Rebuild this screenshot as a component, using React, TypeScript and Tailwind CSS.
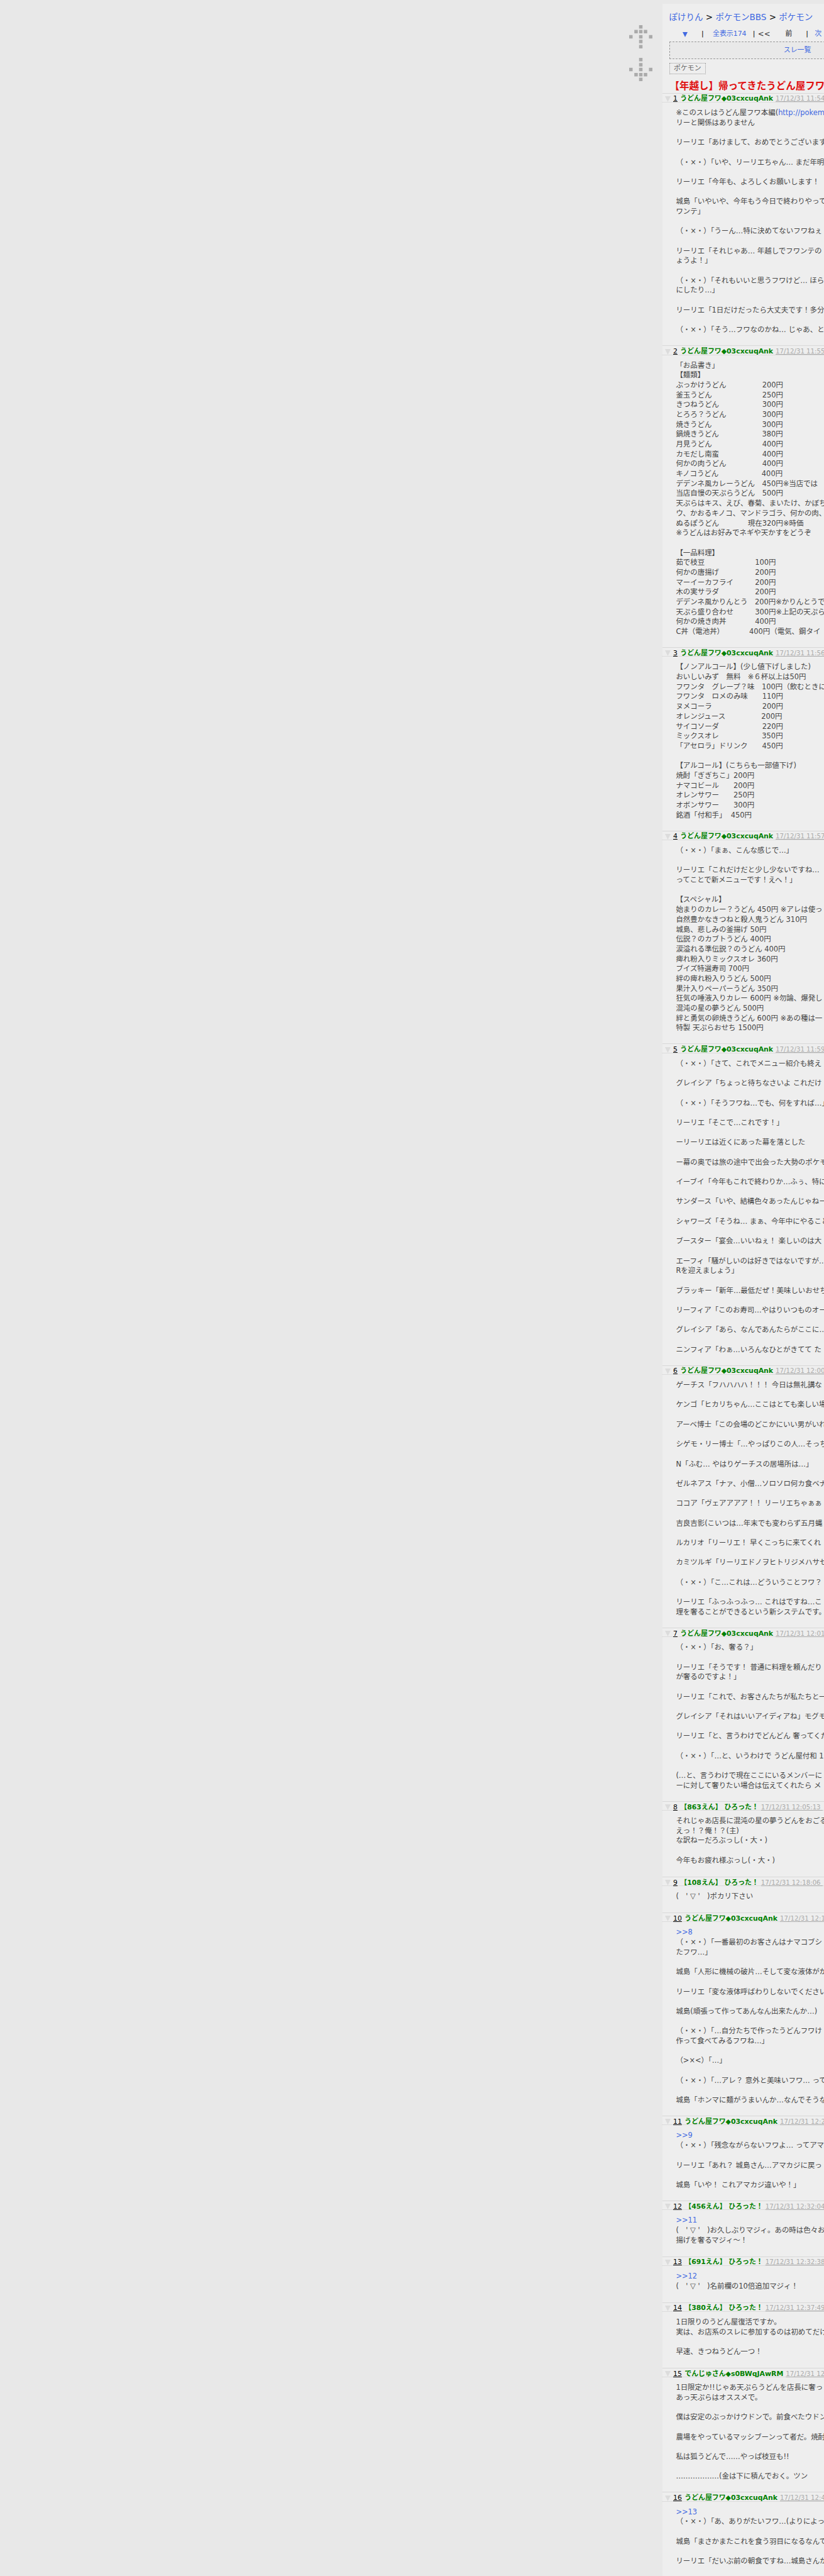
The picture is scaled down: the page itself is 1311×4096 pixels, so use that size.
const FW = "　";
const sp = (n: number) => FW.repeat(n);
const FACE = "（・×・）";
const KAO = "(　' ▽ '　)";
const ME = "うどん屋フワ◆03cxcuqAnk";

type Post = { no: number; name: string; date: string; lines: string[] };

const posts: Post[] = [
  {
    no: 1,
    name: ME,
    date: "17/12/31 11:54",
    lines: [
      "※このスレはうどん屋フワ本編(http://pokemon",
      "リーと関係はありません",
      "",
      "リーリエ「あけまして、おめでとうございます",
      "",
      `${FACE}「いや、リーリエちゃん… まだ年明`,
      "",
      "リーリエ「今年も、よろしくお願いします！",
      "",
      "城島「いやいや、今年もう今日で終わりやって",
      "ワンテ」",
      "",
      `${FACE}「うーん…特に決めてないフワねぇ`,
      "",
      "リーリエ「それじゃあ… 年越しでフワンテの",
      "ょうよ！」",
      "",
      `${FACE}「それもいいと思うフワけど… ほら`,
      "にしたり…」",
      "",
      "リーリエ「1日だけだったら大丈夫です！多分",
      "",
      `${FACE}「そう…フワなのかね… じゃあ、と`,
    ],
  },
  {
    no: 2,
    name: ME,
    date: "17/12/31 11:55",
    lines: [
      "「お品書き」",
      "【麺類】",
      `ぶっかけうどん${sp(5)}200円`,
      `釜玉うどん${sp(7)}250円`,
      `きつねうどん${sp(6)}300円`,
      `とろろ？うどん${sp(5)}300円`,
      `焼きうどん${sp(7)}300円`,
      `鍋焼きうどん${sp(6)}380円`,
      `月見うどん${sp(7)}400円`,
      `カモだし南蛮${sp(6)}400円`,
      `何かの肉うどん${sp(5)}400円`,
      `キノコうどん${sp(6)}400円`,
      `デデンネ風カレーうどん${sp(1)}450円※当店では`,
      `当店自慢の天ぷらうどん${sp(1)}500円`,
      "天ぷらはキス、えび、春菊、まいたけ、かぼち",
      "ウ、かおるキノコ、マンドラゴラ、何かの肉、",
      `ぬるぽうどん${sp(4)}現在320円※時価`,
      "※うどんはお好みでネギや天かすをどうぞ",
      "",
      "【一品料理】",
      `茹で枝豆${sp(7)}100円`,
      `何かの唐揚げ${sp(5)}200円`,
      `マーイーカフライ${sp(3)}200円`,
      `木の実サラダ${sp(5)}200円`,
      `デデンネ風かりんとう${sp(1)}200円※かりんとうで`,
      `天ぷら盛り合わせ${sp(3)}300円※上記の天ぷら`,
      `何かの焼き肉丼${sp(4)}400円`,
      `C丼（電池丼）${sp(4)}400円（電気、鋼タイ`,
    ],
  },
  {
    no: 3,
    name: ME,
    date: "17/12/31 11:56",
    lines: [
      "【ノンアルコール】(少し値下げしました)",
      `おいしいみず${FW}無料${FW}※６杯以上は50円`,
      `フワンタ${FW}グレープ？味${FW}100円（飲むときに`,
      `フワンタ${FW}ロメのみ味${sp(2)}110円`,
      `ヌメコーラ${sp(7)}200円`,
      `オレンジュース${sp(5)}200円`,
      `サイコソーダ${sp(6)}220円`,
      `ミックスオレ${sp(6)}350円`,
      `「アセロラ」ドリンク${sp(2)}450円`,
      "",
      "【アルコール】(こちらも一部値下げ)",
      "焼酎「ぎぎちこ」200円",
      `ナマコビール${sp(2)}200円`,
      `オレンサワー${sp(2)}250円`,
      `オボンサワー${sp(2)}300円`,
      "銘酒「付和手」  450円",
    ],
  },
  {
    no: 4,
    name: ME,
    date: "17/12/31 11:57",
    lines: [
      `${FACE}「まぁ、こんな感じで…」`,
      "",
      "リーリエ「これだけだと少し少ないですね…",
      "ってことで新メニューです！えへ！」",
      "",
      "【スペシャル】",
      "始まりのカレー？うどん 450円 ※アレは使っ",
      "自然豊かなきつねと殺人鬼うどん 310円",
      "城島、悲しみの釜揚げ 50円",
      "伝説？のカブトうどん 400円",
      "涙溢れる準伝説？のうどん 400円",
      "痺れ粉入りミックスオレ 360円",
      "ブイズ特選寿司 700円",
      "絆の痺れ粉入りうどん 500円",
      "果汁入りペーパーうどん 350円",
      "狂気の唾液入りカレー 600円 ※勿論、爆発し",
      "混沌の星の夢うどん 500円",
      "絆と勇気の卵焼きうどん 600円 ※あの種は一",
      "特製 天ぷらおせち 1500円",
    ],
  },
  {
    no: 5,
    name: ME,
    date: "17/12/31 11:59",
    lines: [
      `${FACE}「さて、これでメニュー紹介も終え`,
      "",
      "グレイシア「ちょっと待ちなさいよ これだけ",
      "",
      `${FACE}「そうフワね…でも、何をすれば…」`,
      "",
      "リーリエ「そこで…これです！」",
      "",
      "ーリーリエは近くにあった幕を落とした",
      "",
      "ー幕の奥では旅の途中で出会った大勢のポケモ",
      "",
      "イーブイ「今年もこれで終わりか…ふぅ、特に",
      "",
      "サンダース「いや、結構色々あったんじゃねー",
      "",
      "シャワーズ「そうね… まぁ、今年中にやること",
      "",
      "ブースター「宴会…いいねぇ！ 楽しいのは大",
      "",
      "エーフィ「騒がしいのは好きではないですが…",
      "Rを迎えましょう」",
      "",
      "ブラッキー「新年…最低だぜ！美味しいおせち",
      "",
      "リーフィア「このお寿司…やはりいつものオー",
      "",
      "グレイシア「あら、なんであんたらがここに…",
      "",
      "ニンフィア「わぁ…いろんなひとがきてて た",
    ],
  },
  {
    no: 6,
    name: ME,
    date: "17/12/31 12:00",
    lines: [
      "ゲーチス「フハハハハ！！！ 今日は無礼講な",
      "",
      "ケンゴ「ヒカリちゃん…ここはとても楽しい場",
      "",
      "アーベ博士「この会場のどこかにいい男がいれ",
      "",
      "シゲモ・リー博士「…やっぱりこの人…そっち",
      "",
      "N「ふむ… やはりゲーチスの居場所は…」",
      "",
      "ゼルネアス「ナァ、小僧…ソロソロ何カ食ベナ",
      "",
      "ココア「ヴェアアアア！！ リーリエちゃぁぁ",
      "",
      "吉良吉影(こいつは…年末でも変わらず五月蝿",
      "",
      "ルカリオ「リーリエ！ 早くこっちに来てくれ",
      "",
      "カミツルギ「リーリエドノヲヒトリジメハサセ",
      "",
      `${FACE}「こ…これは…どういうことフワ？`,
      "",
      "リーリエ「ふっふっふっ… これはですね…こ",
      "理を奢ることができるという新システムです。",
    ],
  },
  {
    no: 7,
    name: ME,
    date: "17/12/31 12:01",
    lines: [
      `${FACE}「お、奢る？」`,
      "",
      "リーリエ「そうです！ 普通に料理を頼んだり",
      "が奢るのですよ！」",
      "",
      "リーリエ「これで、お客さんたちが私たちと一",
      "",
      "グレイシア「それはいいアイディアね」モグモ",
      "",
      "リーリエ「と、言うわけでどんどん 奢ってくだ",
      "",
      `${FACE}「…と、いうわけで うどん屋付和 1`,
      "",
      "(…と、言うわけで現在ここにいるメンバーに",
      "ーに対して奢りたい場合は伝えてくれたら メ",
    ],
  },
  {
    no: 8,
    name: "【863えん】 ひろった！",
    date: "17/12/31 12:05:13 ",
    lines: ["それじゃあ店長に混沌の星の夢うどんをおごる", "えっ！？俺！？(主)", "な訳ねーだろぶっし(・大・)", "", "今年もお疲れ様ぶっし(・大・)"],
  },
  {
    no: 9,
    name: "【108えん】 ひろった！",
    date: "17/12/31 12:18:06 ",
    lines: [`${KAO}ポカリ下さい`],
  },
  {
    no: 10,
    name: ME,
    date: "17/12/31 12:1",
    lines: [
      ">>8",
      `${FACE}「一番最初のお客さんはナマコブシ`,
      "たフワ…」",
      "",
      "城島「人形に機械の破片…そして変な液体がか",
      "",
      "リーリエ「変な液体呼ばわりしないでください",
      "",
      "城島(頑張って作ってあんなん出来たんか…)",
      "",
      `${FACE}「…自分たちで作ったうどんフワけ`,
      "作って食べてみるフワね…」",
      "",
      "（>×<）「…」",
      "",
      `${FACE}「…アレ？ 意外と美味いフワ… って`,
      "",
      "城島「ホンマに麺がうまいんか…なんでそうな",
    ],
  },
  {
    no: 11,
    name: ME,
    date: "17/12/31 12:2",
    lines: [">>9", `${FACE}「残念ながらないフワよ… ってアマ`, "", "リーリエ「あれ？ 城島さん…アマカジに戻っ", "", "城島「いや！ これアマカジ違いや！」"],
  },
  {
    no: 12,
    name: "【456えん】 ひろった！",
    date: "17/12/31 12:32:04",
    lines: [">>11", `${KAO}お久しぶりマジィ。あの時は色々お`, "揚げを奢るマジィ～！"],
  },
  {
    no: 13,
    name: "【691えん】 ひろった！",
    date: "17/12/31 12:32:38",
    lines: [">>12", `${KAO}名前欄の10倍追加マジィ！`],
  },
  {
    no: 14,
    name: "【380えん】 ひろった！",
    date: "17/12/31 12:37:49",
    lines: ["1日限りのうどん屋復活ですか。", "実は、お店系のスレに参加するのは初めてだけ", "", "早速、きつねうどん一つ！"],
  },
  {
    no: 15,
    name: "でんじゅさん◆s0BWqJAwRM",
    date: "17/12/31 12",
    lines: [
      "1日限定か!!じゃあ天ぷらうどんを店長に奢っ",
      "あっ天ぷらはオススメで。",
      "",
      "僕は安定のぶっかけウドンで。前食べたウドン",
      "",
      "農場をやっているマッシブーンって者だ。焼酎",
      "",
      "私は狐うどんで……やっぱ枝豆も!!",
      "",
      "………………(金は下に積んでおく。ツン",
    ],
  },
  {
    no: 16,
    name: ME,
    date: "17/12/31 12:4",
    lines: [">>13", `${FACE}「あ、ありがたいフワ…(よりによっ`, "", "城島「まさかまたこれを食う羽目になるなんて", "", "リーリエ「だいぶ前の朝食ですね…城島さんが"],
  },
];

const BodyLine = ({ text }: { text: string }) => {
  if (text.startsWith(">>")) return <div className="text-[#4169e1]">{text}</div>;
  const i = text.indexOf("http://");
  if (i >= 0)
    return (
      <div>
        {text.slice(0, i)}
        <span className="text-[#4169e1]">{text.slice(i)}</span>
      </div>
    );
  return <div>{text || " "}</div>;
};

const PostBlock = ({ post }: { post: Post }) => (
  <div className="border-t border-[#d8d8d8]">
    <div className="flex items-end -ml-px h-[14.3px] border-b border-[#dcdcdc] text-[10.9px] leading-[9.6px] whitespace-pre">
      <svg className="ml-[4.8px] shrink-0" width="9" height="9" viewBox="0 0 9 9">
        <polygon points="0,0 9,0 4.5,9" fill="#dcdcdc" />
      </svg>
      <span className="ml-[3.8px] text-black underline">{post.no}</span>
      <span className="ml-[4.4px] font-bold text-[#008000]">{post.name}</span>
      <span className="ml-[4px] text-[10.2px] text-[#aaaaaa] underline">{post.date}</span>
    </div>
    {/* names without a trip sit in a slightly taller block */}
    <div
      className={`pl-[21px] pt-[9px] text-[11.45px] leading-[15.686px] text-[#444444] whitespace-pre ${
        post.name.includes("◆") ? "pb-[16.35px]" : "pb-[17.3px]"
      }`}
    >
      {post.lines.map((l, i) => (
        <BodyLine key={i} text={l} />
      ))}
    </div>
  </div>
);

const arrowCells: [number, number][] = [
  [71, 59], [60, 70], [71, 70], [82, 70], [48, 82], [71, 82], [94, 82], [71, 93], [71, 105],
  [71, 135], [71, 147], [48, 158], [71, 158], [94, 158], [60, 170], [71, 170], [82, 170], [71, 181],
];

const App = () => {
  return (
    <div className="flex w-[1311px] h-[4096px] overflow-hidden bg-[#e8e8e8] font-['DejaVu_Sans','Noto_Sans_CJK_JP',sans-serif]">
      <div className="w-[1054.4px] shrink-0 flex justify-end pr-[16.4px] pt-[40px]">
        <svg width="37" height="89" viewBox="48 59 54 130" className="shrink-0">
          {arrowCells.map(([x, y]) => (
            <rect key={`${x}-${y}`} x={x} y={y} width="8" height="8" fill="#aaaaaa" />
          ))}
        </svg>
      </div>

      <div className="w-[900px] shrink-0 mt-[5.5px] bg-[#eeeeee] text-[#444444]">
        <div className="pl-[10.2px] pt-[12.1px]">
          <div className="text-[13.5px] leading-[18px] text-black whitespace-pre">
            <span className="text-[#4169e1]">ぽけりん</span> &gt; <span className="text-[#4169e1]">ポケモンBBS</span> &gt;{" "}
            <span className="text-[#4169e1]">ポケモン</span>
          </div>

          <div className="flex items-center mt-[11px] h-[16px] text-[10.9px] whitespace-pre">
            <svg className="ml-[21.8px] shrink-0" width="8" height="8" viewBox="0 0 8 8">
              <polygon points="0,0 8,0 4,8" fill="#4169e1" />
            </svg>
            <span className="ml-[21.6px] text-black">|</span>
            <span className="ml-[14.4px] text-[#4169e1]">全表示174</span>
            <span className="ml-[10.3px] text-black">|</span>
            <span className="ml-[4.4px] text-[11.7px] text-[#333333]">&lt;&lt;</span>
            <span className="ml-[24px] text-[#222222]">前</span>
            <span className="ml-[22px] text-black">|</span>
            <span className="ml-[10.3px] text-[#4169e1]">次</span>
          </div>

          <div className="flex items-center justify-center mt-[3.1px] w-[408px] h-[28px] border border-dashed border-[#999999] bg-[#e9e9e9] text-[10.9px] text-[#4169e1]">
            スレ一覧
          </div>

          <div className="flex items-center justify-center mt-[6px] w-[58.4px] h-[18.2px] border border-dotted border-[#999999] text-[10.9px] text-[#666666]">
            ポケモン
          </div>

          <h1 className="mt-[8.6px] pl-[1px] h-[21.3px] text-[15.5px] leading-[22px] font-bold text-[#e01010] whitespace-pre">
            【年越し】帰ってきたうどん屋フワ
          </h1>
        </div>

        {posts.map((p) => (
          <PostBlock key={p.no} post={p} />
        ))}
      </div>
    </div>
  );
};

export default App;
